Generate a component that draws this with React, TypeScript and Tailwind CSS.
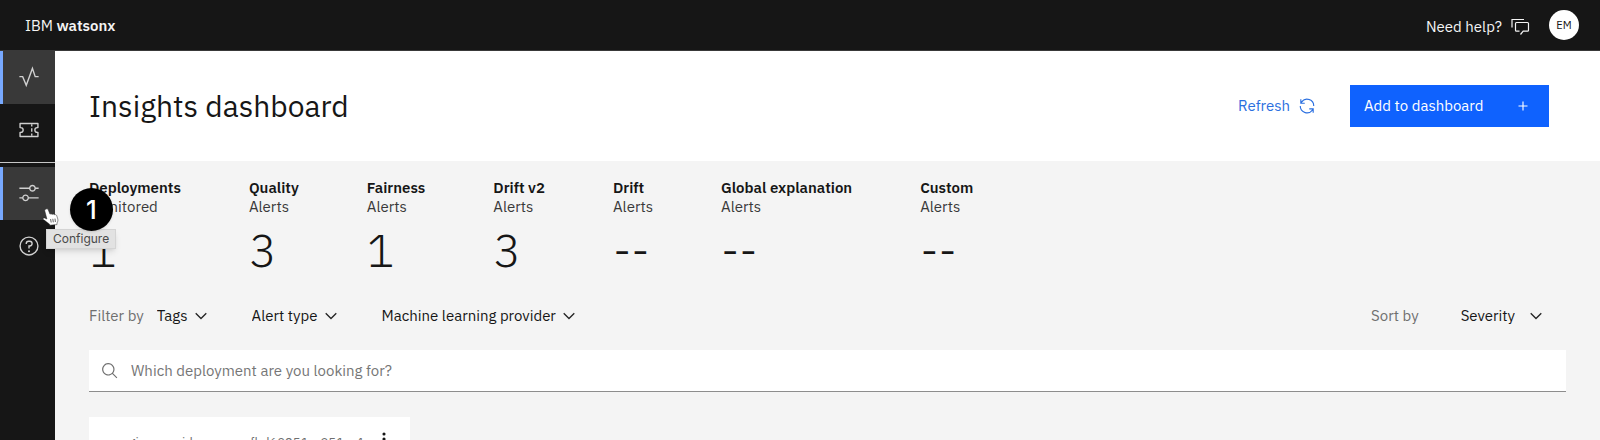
import { ReactNode } from "react";

const plex = "font-[IBM_Plex_Sans,Roboto,sans-serif]";

function Chevron() {
  return (
    <svg
      viewBox="0 0 16 16"
      fill="none"
      stroke="currentColor"
      strokeWidth="1.2"
      aria-hidden="true"
      className="pointer-events-none size-[18px] shrink-0 text-[#262626]"
    >
      <path d="M3.300 5.600L8 10.300L12.700 5.600" />
    </svg>
  );
}

function NavItem({ label, active, children }: { label: string; active?: boolean; children: ReactNode }) {
  return (
    <button
      type="button"
      aria-label={label}
      className={
        "flex h-[53px] w-full items-center justify-center border-l-3 pr-px pb-0.5 text-[#d0d0d0] " +
        (active ? "border-[#78a9ff] bg-[#393939]" : "border-transparent")
      }
    >
      <svg viewBox="0 0 32 32" fill="currentColor" className="size-[22px]" aria-hidden="true">
        {children}
      </svg>
    </button>
  );
}

const stats = [
  { name: "Deployments", kind: "Monitored", value: "1" },
  { name: "Quality", kind: "Alerts", value: "3" },
  { name: "Fairness", kind: "Alerts", value: "1" },
  { name: "Drift v2", kind: "Alerts", value: "3" },
  { name: "Drift", kind: "Alerts", value: "--" },
  { name: "Global explanation", kind: "Alerts", value: "--" },
  { name: "Custom", kind: "Alerts", value: "--" },
];

function Picker({ label, wide }: { label: string; wide?: boolean }) {
  return (
    <label className={"flex items-center " + (wide ? "gap-3" : "gap-1")}>
      <select aria-label={label} className="field-sizing-content appearance-none bg-transparent text-[#161616]">
        <option>{label}</option>
      </select>
      <Chevron />
    </label>
  );
}

export default function App() {
  return (
    <div className={"relative flex h-screen flex-col overflow-hidden bg-[#f4f4f4] text-[15px] leading-5 text-[#161616] " + plex}>
      <header className="flex h-[51px] shrink-0 items-center border-b border-[#393939] bg-[#161616] pr-[21px] pl-[25px] text-[#f4f4f4]">
        <a href="#home" className="pt-0.5">
          IBM <span className="font-semibold">watsonx</span>
        </a>
        <button type="button" className="ml-auto flex items-center gap-2 pt-1">
          Need help?
          <svg viewBox="0 0 20 20" fill="none" stroke="currentColor" strokeWidth="1.200" className="size-5" aria-hidden="true">
            <path d="M2 10.500V2.500H14" />
            <path d="M10.500 17.500L13.200 14.200H17.500A1 1 0 0 0 18.500 13.200V6.500A1 1 0 0 0 17.500 5.500H6.500A1 1 0 0 0 5.500 6.500V13.200A1 1 0 0 0 6.500 14.200H9.500" />
          </svg>
        </button>
        <button type="button" aria-label="Profile" className="ml-[19px] size-[30px] rounded-full bg-white text-[11px] text-[#161616]">
          EM
        </button>
      </header>

      <div className="flex min-h-0 flex-1">
        <nav className="flex w-[55px] shrink-0 flex-col bg-[#161616]">
          <NavItem label="Insights dashboard" active>
            <path d="M2 15.500H6.800L12 28L21 3.500L25 15.500H30" fill="none" stroke="currentColor" strokeWidth="2" />
          </NavItem>
          <NavItem label="Tickets">
            <path
              d="M3 6.500H29V12.500H28A3.500 3.500 0 0 0 28 19.500H29V25.500H3V19.500H4A3.500 3.500 0 0 0 4 12.500H3Z"
              fill="none"
              stroke="currentColor"
              strokeWidth="2"
              strokeLinejoin="round"
            />
            <path d="M20 7.500V11M20 13.500V18.500M20 21V24.500" stroke="currentColor" strokeWidth="2" />
          </NavItem>
          <hr className="mt-[5px] mb-1 border-[#c6c6c6]" />
          <NavItem label="Configure" active>
            <path d="M30,8h-4.1c-0.5-2.3-2.5-4-4.9-4s-4.4,1.7-4.9,4H2v2h14.1c0.5,2.3,2.5,4,4.9,4s4.4-1.7,4.9-4H30V8z M21,12c-1.7,0-3-1.3-3-3s1.3-3,3-3s3,1.3,3,3S22.7,12,21,12z" />
            <path d="M2,24h4.1c0.5,2.3,2.5,4,4.9,4s4.4-1.7,4.9-4H30v-2H15.9c-0.5-2.3-2.5-4-4.9-4s-4.4,1.7-4.9,4H2V24z M11,20c1.7,0,3,1.3,3,3s-1.3,3-3,3s-3-1.3-3-3S9.3,20,11,20z" />
          </NavItem>
          <NavItem label="Help">
            <path d="M16,2A14,14,0,1,0,30,16,14,14,0,0,0,16,2Zm0,26A12,12,0,1,1,28,16,12,12,0,0,1,16,28Z" />
            <circle cx="16" cy="23.5" r="1.5" />
            <path d="M17,8H15.5A4.49,4.49,0,0,0,11,12.5V13h2v-.5A2.5,2.5,0,0,1,15.5,10H17a2.5,2.5,0,0,1,0,5H15v4.5h2V17a4.5,4.5,0,0,0,0-9Z" />
          </NavItem>
        </nav>

        <main className="min-w-0 flex-1">
          <div className="flex h-[110px] items-center bg-white pr-[51px] pl-[34px]">
            <h1 className="text-[30px] leading-10">Insights dashboard</h1>
            <button type="button" className="ml-auto flex items-center gap-2 text-[#2a6fe0]">
              Refresh
              <svg viewBox="0 0 32 32" fill="currentColor" className="size-[18px]" aria-hidden="true">
                <path d="M12,10H6.78A11,11,0,0,1,27,16h2A13,13,0,0,0,6,7.68V4H4v8h8Z" />
                <path d="M20,22h5.22A11,11,0,0,1,5,16H3a13,13,0,0,0,23,8.32V28h2V20H20Z" />
              </svg>
            </button>
            <button
              type="button"
              className="ml-[34px] flex h-[42px] w-[199px] items-center justify-between bg-[#0f62fe] pr-[17px] pl-[14px] text-white"
            >
              Add to dashboard
              <svg viewBox="0 0 32 32" fill="currentColor" className="size-[18px]" aria-hidden="true">
                <path d="M17 15V8H15V15H8V17H15V24H17V17H24V15z" />
              </svg>
            </button>
          </div>

          <dl className="flex gap-[68px] pt-[17px] pl-[34px]">
            {stats.map((s) => (
              <div key={s.name} className="shrink-0">
                <dt className="leading-[19px]">
                  <span className="block font-semibold">{s.name}</span>
                  <span className="block text-[#393939]">{s.kind}</span>
                </dt>
                <dd className="mt-2 text-[46px] leading-[52px] font-light">{s.value}</dd>
              </div>
            ))}
          </dl>

          <div className="mt-[30px] flex items-center pr-[55px] pl-[34px] text-[#6f6f6f]">
            <span className="mr-[13px]">Filter by</span>
            <div className="flex gap-[42px]">
              <Picker label="Tags" />
              <Picker label="Alert type" />
              <Picker label="Machine learning provider" />
            </div>
            <span className="mr-[42px] ml-auto">Sort by</span>
            <Picker label="Severity" wide />
          </div>

          <label className="mx-[34px] mt-6 flex h-[42px] items-center gap-3 border-b border-[#8d8d8d] bg-white px-3">
            <svg viewBox="0 0 32 32" fill="#6f6f6f" className="size-[18px]" aria-hidden="true">
              <path d="M29,27.5859l-7.5521-7.5521a11.0177,11.0177,0,1,0-1.4141,1.4141L27.5859,29ZM4,13a9,9,0,1,1,9,9A9.01,9.01,0,0,1,4,13Z" />
            </svg>
            <input
              type="search"
              aria-label="Search deployments"
              placeholder="Which deployment are you looking for?"
              className="min-w-0 flex-1 bg-transparent outline-none placeholder:text-[#767676]"
            />
          </label>

          <article className="mt-[25px] ml-[34px] flex h-40 w-[321px] items-start justify-between bg-white pt-3 pr-4 pl-[25px]">
            <p className="pt-1 text-[13px] text-[#6f6f6f]">engine provider source fbd60251a-951c-4</p>
            <button type="button" aria-label="Card options">
              <svg viewBox="0 0 32 32" fill="currentColor" className="size-5" aria-hidden="true">
                <circle cx="16" cy="8" r="2.500" />
                <circle cx="16" cy="16" r="2.500" />
                <circle cx="16" cy="24" r="2.500" />
              </svg>
            </button>
          </article>
        </main>
      </div>

      <div
        role="tooltip"
        className="absolute top-[229px] left-[46px] border border-[#d4d4d4] bg-[#e2e2e2] px-1.5 font-[Inter,sans-serif] text-[12px] leading-[18px] text-[#4a4a4a] shadow-md"
      >
        Configure
      </div>
      <div className="absolute top-[188px] left-[70px] flex size-[43px] items-center justify-center rounded-full bg-black font-[Inter,sans-serif] text-[26px] leading-6 font-medium text-white shadow-sm">
        1
      </div>
      <svg viewBox="0 0 17 18" className="absolute top-[208px] left-[42px] h-[18px] w-[17px]" aria-hidden="true">
        <path
          d="M4.200 1C5.200 .6 6 1.200 6.400 2.200L8 6.200C8.600 5.600 9.600 5.700 10.100 6.500C10.800 5.800 11.900 5.900 12.400 6.800C13.200 6.300 14.300 6.700 14.700 7.600L15.800 11C16.200 12.600 15.600 14 15 15L15 16.600L7.800 17.200L7.400 16C5.500 14.900 3.500 12.900 1.400 11.600C.4 10.800 1.400 9.600 2.700 10L4.900 11L2.800 3C2.500 2 3.200 1.300 4.200 1Z"
          fill="#fff"
          stroke="#222"
          strokeWidth=".5"
        />
        <path d="M8.600 11L9.200 14.500M10.800 10.800L11.300 14.300M13 10.600L13.400 14" stroke="#222" strokeWidth=".7" />
      </svg>
    </div>
  );
}
